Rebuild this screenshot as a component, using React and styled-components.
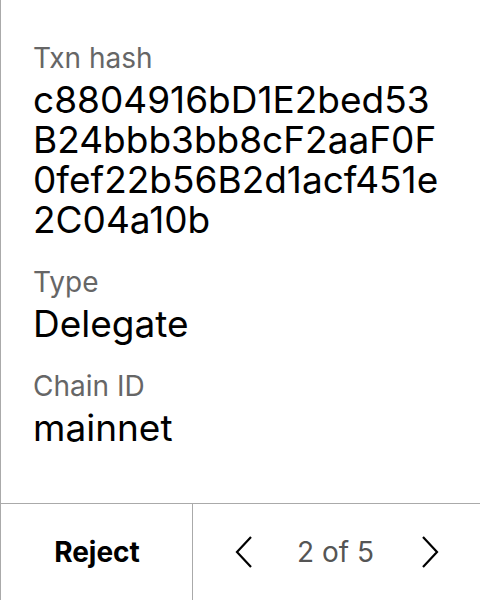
import React from 'react';
import styled, { createGlobalStyle } from 'styled-components';

const GlobalStyle = createGlobalStyle`
  html, body {
    margin: 0;
    padding: 0;
    background: #ffffff;
  }
  body {
    font-family: Inter, "Noto Sans", sans-serif;
    color: #000000;
  }
`;

const Screen = styled.div`
  width: 480px;
  height: 600px;
  box-sizing: border-box;
  border-left: 1px solid #aaaaaa;
  display: flex;
  flex-direction: column;
`;

const Details = styled.div`
  flex: 1;
  padding: 41px 34px 0 32px;
  display: flex;
  flex-direction: column;
  gap: 25px;
`;

const Field = styled.div`
  display: flex;
  flex-direction: column;
  gap: 5px;
`;

const Label = styled.div`
  font-size: 28px;
  line-height: 34px;
  color: #666666;
`;

const Value = styled.div`
  font-size: 37px;
  line-height: 40px;
  color: #000000;
  word-break: ${p => (p.$hash ? 'break-all' : 'normal')};
`;

const Footer = styled.div`
  height: 96px;
  border-top: 1px solid #aaaaaa;
  display: flex;
`;

const RejectButton = styled.button`
  width: 192px;
  border: none;
  border-right: 1px solid #aaaaaa;
  background: none;
  font-family: Inter, sans-serif;
  font-size: 28px;
  font-weight: 700;
  color: #000000;
  padding: 0 0 0 1px;
`;

const Pager = styled.div`
  flex: 1;
  display: flex;
  align-items: center;
  justify-content: space-between;
  padding: 0 41px 0 42px;
`;

const PageText = styled.span`
  font-size: 28px;
  color: #555555;
  margin-right: 3px;
`;

const Arrow = styled.button`
  border: none;
  background: none;
  padding: 0;
  display: flex;
`;

const Chevron = ({ dir }) => (
  <svg width="18" height="32" viewBox="0 0 18 32" fill="none">
    <path
      d={dir === 'left' ? 'M16 1 L2 16 L16 31' : 'M2 1 L16 16 L2 31'}
      stroke="#000"
      strokeWidth="2.2"
    />
  </svg>
);

export default function App() {
  return (
    <>
      <GlobalStyle />
      <Screen>
        <Details>
          <Field>
            <Label>Txn hash</Label>
            <Value $hash>c8804916bD1E2bed53B24bbb3bb8cF2aaF0F0fef22b56B2d1acf451e2C04a10b</Value>
          </Field>
          <Field>
            <Label>Type</Label>
            <Value>Delegate</Value>
          </Field>
          <Field>
            <Label>Chain ID</Label>
            <Value>mainnet</Value>
          </Field>
        </Details>
        <Footer>
          <RejectButton>Reject</RejectButton>
          <Pager>
            <Arrow><Chevron dir="left" /></Arrow>
            <PageText>2 of 5</PageText>
            <Arrow><Chevron dir="right" /></Arrow>
          </Pager>
        </Footer>
      </Screen>
    </>
  );
}
